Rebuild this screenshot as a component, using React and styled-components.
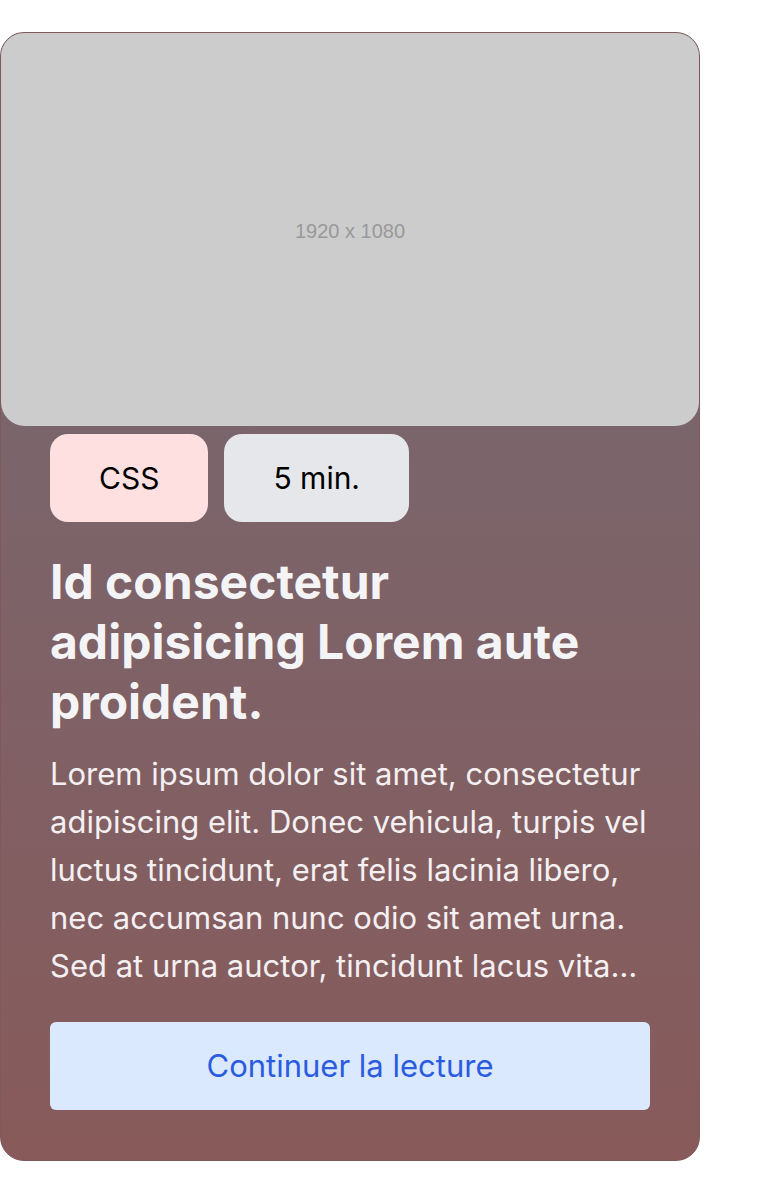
import React from 'react'
import styled, { createGlobalStyle } from 'styled-components'

const GlobalStyle = createGlobalStyle`
  * { box-sizing: border-box; }
  body {
    margin: 0;
    background: #fff;
    font-family: Inter, "Noto Sans", sans-serif;
  }
`

const Page = styled.div`
  padding-top: 32px;
`

const Card = styled.article`
  width: 700px;
  border: 1px solid #7e5a5c;
  border-radius: 24px;
  overflow: hidden;
  background: linear-gradient(180deg, #766870 0%, #79666d 30%, #885a5a 100%);
  display: flex;
  flex-direction: column;
  padding-bottom: 50px;
`

const Picture = styled.div`
  width: 100%;
  aspect-ratio: 16 / 9;
  background: #cccccc;
  border-radius: 0 0 24px 24px;
  display: flex;
  align-items: center;
  justify-content: center;
  padding-top: 4px;
  color: #999999;
  font-family: "Liberation Sans", Arial, sans-serif;
  font-size: 20px;
`

const Body = styled.div`
  padding: 8px 49px 0;
  display: flex;
  flex-direction: column;
`

const Tags = styled.div`
  display: flex;
  gap: 16px;
`

const Tag = styled.span`
  height: 88px;
  padding: 0 49px;
  display: inline-flex;
  align-items: center;
  border-radius: 18px;
  background: ${p => p.$bg};
  color: #000;
  font-size: 30px;
`

const Title = styled.h2`
  margin: 30px 0 0;
  font-size: 48px;
  line-height: 60px;
  font-weight: 700;
  color: #f4f4f6;
`

const Text = styled.p`
  margin: 18px 0 0;
  font-size: 31px;
  line-height: 48px;
  color: #f4f0f2;
  display: -webkit-box;
  -webkit-line-clamp: 5;
  -webkit-box-orient: vertical;
  overflow: hidden;
`

const Button = styled.button`
  margin-top: 32px;
  height: 88px;
  border: none;
  border-radius: 6px;
  background: #dbe9fe;
  color: #2b5ce0;
  font-family: Inter, "Noto Sans", sans-serif;
  font-size: 31px;
  cursor: pointer;
`

export default function App() {
  return (
    <Page>
      <GlobalStyle />
      <Card>
        <Picture>1920 x 1080</Picture>
        <Body>
          <Tags>
            <Tag $bg="#fee0e0">CSS</Tag>
            <Tag $bg="#e5e7eb">5 min.</Tag>
          </Tags>
          <Title>Id consectetur adipisicing Lorem aute proident.</Title>
          <Text>
            Lorem ipsum dolor sit amet, consectetur adipiscing elit. Donec vehicula, turpis vel luctus
            tincidunt, erat felis lacinia libero, nec accumsan nunc odio sit amet urna. Sed at urna
            auctor, tincidunt lacus vitae, pharetra nisl. Integer non arcu at turpis malesuada.
          </Text>
          <Button>Continuer la lecture</Button>
        </Body>
      </Card>
    </Page>
  )
}
